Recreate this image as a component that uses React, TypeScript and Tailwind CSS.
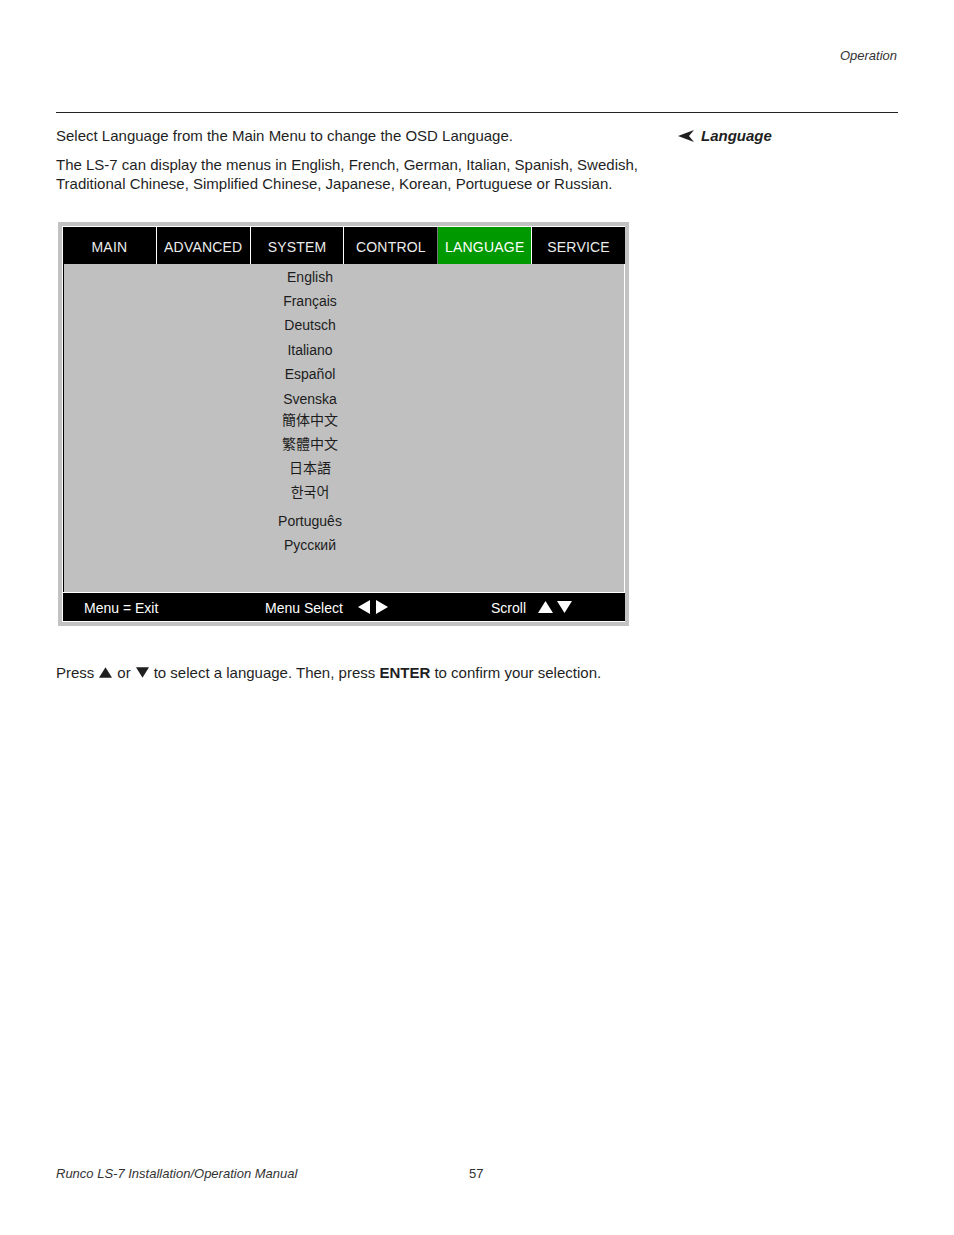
import type { ReactNode } from "react";

const TABS = ["MAIN", "ADVANCED", "SYSTEM", "CONTROL", "LANGUAGE", "SERVICE"];
const ACTIVE_TAB = "LANGUAGE";

const LATIN = ["English", "Français", "Deutsch", "Italiano", "Español", "Svenska"];
const CJK = ["簡体中文", "繁體中文", "日本語", "한국어"];
const TAIL = ["Português", "Русский"];

const SANS = "font-['Liberation_Sans',Arial,sans-serif]";
const OSD_FONT = "font-['Liberation_Sans','Noto_Sans_CJK_SC','Noto_Sans_CJK_KR',sans-serif]";

function Tri({ dir, className = "" }: { dir: "up" | "down" | "left" | "right"; className?: string }) {
	const pts = {
		up: "0,12 7.5,0 15,12",
		down: "0,0 15,0 7.5,12",
		left: "12,0 12,14 0,7",
		right: "0,0 0,14 12,7",
	}[dir];
	const vb = dir === "up" || dir === "down" ? "0 0 15 12" : "0 0 12 14";
	const size = dir === "up" || dir === "down" ? { width: 15, height: 12 } : { width: 12, height: 14 };
	return (
		<svg {...size} viewBox={vb} className={className} aria-hidden="true">
			<polygon points={pts} fill="currentColor" />
		</svg>
	);
}

function LangRow({ children, cjk }: { children: ReactNode; cjk?: boolean }) {
	return (
		<div className={`flex items-center justify-center ${cjk ? "h-[24px]" : "h-[24.4px]"}`}>{children}</div>
	);
}

function Osd() {
	return (
		<div className="w-[571px] border-[4px] border-[#c2c2c2] bg-[#c2c2c2]">
			<div className="border-l border-t border-white bg-white">
				{/* tab bar */}
				<div className="flex h-[37px] bg-black">
					{TABS.map((t, i) => (
						<div
							key={t}
							className={`flex-1 flex items-center justify-center pt-[3px] text-[14px] tracking-[0.2px] ${
								t === ACTIVE_TAB ? "bg-[#009900] text-white" : "text-[#ececec]"
							} ${i > 0 ? (t === ACTIVE_TAB ? "border-l border-[#777]" : "border-l border-white") : ""}`}
						>
							{t}
						</div>
					))}
				</div>

				{/* language list */}
				<div className="h-[328px] bg-[#c0c0c0] border-l border-black border-r border-r-white pt-[1px] pr-[68px] text-[14px] text-[#1c1c1c]">
					{LATIN.map((l) => (
						<LangRow key={l}>{l}</LangRow>
					))}
					<div className="-mt-[3px]">
						{CJK.map((l) => (
							<LangRow key={l} cjk>
								{l}
							</LangRow>
						))}
					</div>
					<div className="mt-[5px]">
						{TAIL.map((l) => (
							<LangRow key={l}>{l}</LangRow>
						))}
					</div>
				</div>

				{/* footer */}
				<div className="border-t border-white">
					<div className="h-[28px] bg-black text-white text-[14px] flex items-center pl-[21px] pt-[3px]">
						<span className="w-[181px]">Menu = Exit</span>
						<span className="w-[226px] flex items-center">
							Menu Select
							<Tri dir="left" className="ml-[15px] -mt-[3px]" />
							<Tri dir="right" className="ml-[6px] -mt-[3px]" />
						</span>
						<span className="flex items-center">
							Scroll
							<Tri dir="up" className="ml-[12px] -mt-[4px]" />
							<Tri dir="down" className="ml-[4px] -mt-[4px]" />
						</span>
					</div>
				</div>
				<div className="h-[1px] bg-white" />
			</div>
		</div>
	);
}

export default function App() {
	return (
		<div className={`w-[954px] min-h-[1235px] bg-white flex flex-col text-[#1f1f1f] ${SANS}`}>
			<div className="pt-[47px] pr-[57px] text-right italic text-[13px] leading-[18px] text-[#333]">Operation</div>

			<div className="mt-[47px] mx-[56px] border-t border-[#222]" />

			<div className="flex pl-[56px] pt-[13px]">
				<div className="w-[622px] text-[15px] leading-[19px]">
					<p>Select Language from the Main Menu to change the OSD Language.</p>
					<p className="mt-[10px]">
						The LS-7 can display the menus in English, French, German, Italian, Spanish, Swedish,
						<br />
						Traditional Chinese, Simplified Chinese, Japanese, Korean, Portuguese or Russian.
					</p>
					<div className={`mt-[29px] ml-[2px] ${OSD_FONT}`}>
						<Osd />
					</div>
					<p className="mt-[37px] flex items-center">
						Press
						<Tri dir="up" className="mx-[5px] w-[13px] h-[11px]" />
						or
						<Tri dir="down" className="mx-[5px] w-[13px] h-[11px]" />
						to select a language. Then, press&nbsp;<strong className="font-bold">ENTER</strong>&nbsp;to confirm your
						selection.
					</p>
				</div>
				<div className="flex items-center h-[20px] text-[15px] font-bold italic">
					<svg width="16" height="12" viewBox="0 0 16 12" aria-hidden="true" className="mr-[7px]">
						<polygon points="0,6 16,0 11,6 16,12" fill="#1f1f1f" />
					</svg>
					Language
				</div>
			</div>

			<div className="mt-auto mb-[52px] pl-[56px] flex italic text-[13px] leading-[18px] text-[#333]">
				<span className="w-[413px]">Runco LS-7 Installation/Operation Manual</span>
				<span className="not-italic">57</span>
			</div>
		</div>
	);
}
